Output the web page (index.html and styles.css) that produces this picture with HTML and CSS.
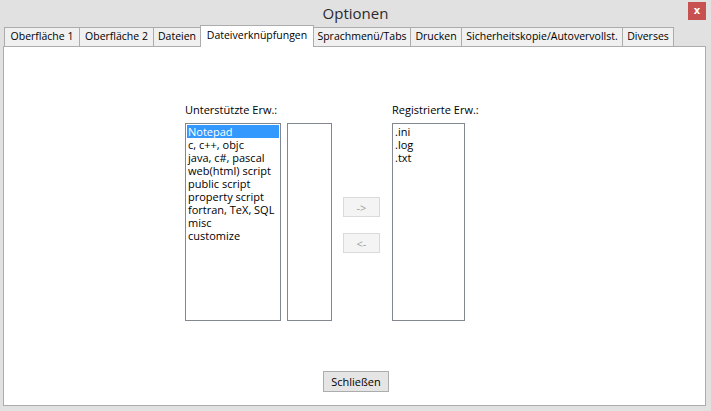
FILE: index.html
```html
<!DOCTYPE html>
<html lang="de">
<head>
  <meta charset="UTF-8" />
  <title>Optionen</title>
  <link rel="stylesheet" href="styles.css">
</head>
<body>
  <div class="window">
    <div class="titlebar">
      <span class="title">Optionen</span>
      <button class="close-btn">x</button>
    </div>

    <div class="tabs">
      <div class="tab">Oberfläche 1</div>
      <div class="tab">Oberfläche 2</div>
      <div class="tab">Dateien</div>
      <div class="tab active">Dateiverknüpfungen</div>
      <div class="tab">Sprachmenü/Tabs</div>
      <div class="tab">Drucken</div>
      <div class="tab">Sicherheitskopie/Autovervollst.</div>
      <div class="tab">Diverses</div>
    </div>

    <div class="panel">
      <div class="assoc">
        <div class="col">
          <div class="label">Unterstützte Erw.:</div>
          <div class="pair">
            <ul class="listbox wide">
              <li class="selected">Notepad</li>
              <li>c, c++, objc</li>
              <li>java, c#, pascal</li>
              <li>web(html) script</li>
              <li>public script</li>
              <li>property script</li>
              <li>fortran, TeX, SQL</li>
              <li>misc</li>
              <li>customize</li>
            </ul>
            <ul class="listbox narrow"></ul>
          </div>
        </div>

        <div class="arrows">
          <button class="btn" disabled>-&gt;</button>
          <button class="btn" disabled>&lt;-</button>
        </div>

        <div class="col">
          <div class="label">Registrierte Erw.:</div>
          <ul class="listbox reg">
            <li>.ini</li>
            <li>.log</li>
            <li>.txt</li>
          </ul>
        </div>
      </div>

      <div class="footer">
        <button class="btn close">Schließen</button>
      </div>
    </div>
  </div>
</body>
</html>
```

FILE: styles.css
```css
body {
  margin: 0;
  font-family: 'Open Sans', 'Noto Sans', sans-serif;
  font-size: 11px;
  color: #000;
  background: #e1e1e1;
}

.window {
  width: 711px;
  height: 411px;
  display: flex;
  flex-direction: column;
  background: #e1e1e1;
  overflow: hidden;
}

.titlebar {
  height: 25px;
  flex-shrink: 0;
  position: relative;
  display: flex;
  justify-content: center;
  align-items: center;
}

.title {
  font-size: 15px;
  color: #2b2b2b;
  padding-top: 1px;
}

.close-btn {
  position: absolute;
  top: 2px;
  right: 5px;
  width: 18px;
  height: 18px;
  border: none;
  padding: 0;
  background: #c75050;
  color: #fff;
  font-family: 'DejaVu Sans', sans-serif;
  font-size: 10px;
  font-weight: bold;
  line-height: 16px;
}

/* tab strip */
.tabs {
  height: 21px;
  flex-shrink: 0;
  display: flex;
  align-items: flex-end;
  padding-left: 4px;
}

.tab {
  height: 19px;
  box-sizing: border-box;
  border: 1px solid #acacac;
  border-bottom: none;
  margin-left: -1px;
  padding: 0;
  background: #f0f0f0;
  font-size: 10.5px;
  line-height: 17px;
  text-align: center;
  white-space: nowrap;
}

.tab:first-child {
  margin-left: 0;
}

/* tab widths as laid out by the dialog */
.tab:nth-child(1) { width: 76px; }
.tab:nth-child(2) { width: 75px; }
.tab:nth-child(3) { width: 48px; }
.tab:nth-child(4) { width: 114px; }
.tab:nth-child(5) { width: 98px; }
.tab:nth-child(6) { width: 52px; }
.tab:nth-child(7) { width: 162px; }
.tab:nth-child(8) { width: 52px; }

.tab.active {
  height: 22px;
  margin-bottom: -1px;
  background: #fff;
  position: relative;
  z-index: 1;
  line-height: 18px;
}

/* main page */
.panel {
  flex: 1;
  margin: 0 5px 5px 3px;
  background: #fff;
  border: 1px solid #acacac;
  display: flex;
  flex-direction: column;
}

.assoc {
  display: flex;
  padding-left: 181px;
  margin-top: 56px;
}

.col {
  display: flex;
  flex-direction: column;
}

.label {
  height: 20px;
  line-height: 13px;
}

.pair {
  display: flex;
  gap: 6px;
}

.listbox {
  list-style: none;
  margin: 0;
  padding: 1px;
  height: 198px;
  box-sizing: border-box;
  border: 1px solid #828790;
  line-height: 13px;
}

.listbox li {
  padding-left: 1px;
  white-space: nowrap;
}

.listbox li.selected {
  background: #3399ff;
  color: #fff;
}

.wide {
  width: 96px;
}

.narrow {
  width: 45px;
}

.reg {
  width: 73px;
}

.arrows {
  display: flex;
  flex-direction: column;
  gap: 16px;
  margin: 94px 12px 0 11px;
}

.btn {
  font-family: inherit;
  font-size: 11px;
  width: 37px;
  height: 20px;
  padding: 0;
  background: #f4f4f4;
  border: 1px solid #dadada;
  color: #a0a0a0;
}

.footer {
  display: flex;
  justify-content: center;
  margin-top: 50px;
  padding-left: 3px;
}

.btn.close {
  width: 66px;
  height: 21px;
  color: #000;
  background: #e5e5e5;
  border-color: #acacac;
}
```
